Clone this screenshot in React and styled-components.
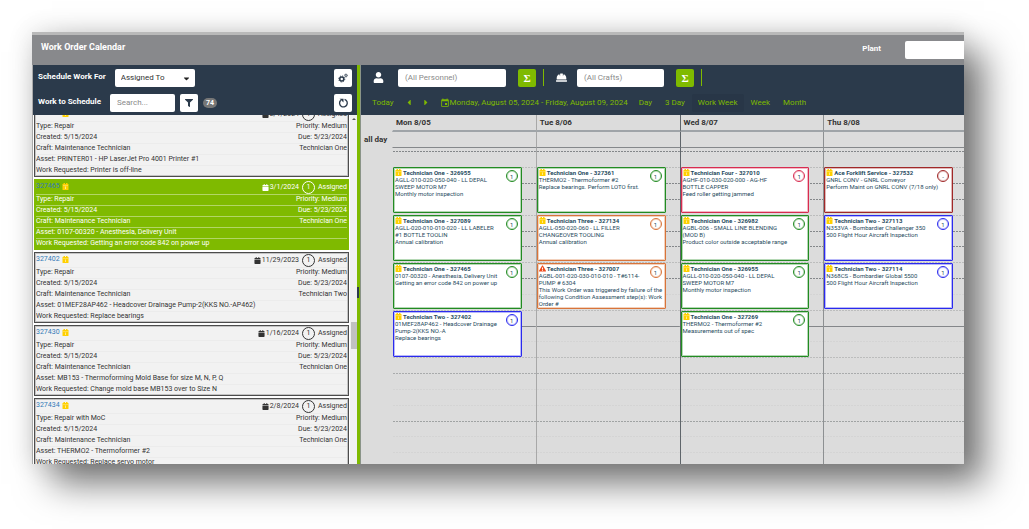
import styled, { createGlobalStyle } from "styled-components";
import {
  FaCalendar,
  FaCaretDown,
  FaCaretLeft,
  FaCaretRight,
  FaExclamationTriangle,
  FaFilter,
  FaHardHat,
  FaUser,
} from "react-icons/fa";
import { MdEvent } from "react-icons/md";

const GlobalStyle = createGlobalStyle`
  * {
    box-sizing: border-box;
  }
  body {
    margin: 0;
    background: #fff;
    font-family: Roboto, "Liberation Sans", Arial, sans-serif;
  }
  button, input, select {
    font-family: inherit;
  }
  ul {
    margin: 0;
    padding: 0;
    list-style: none;
  }
`;

const Page = styled.div`
  height: 100vh;
  padding: 32px 65px 65px 32px;
`;
const Frame = styled.div`
  display: flex;
  flex-direction: column;
  height: 100%;
  background: #fff;
  box-shadow: 20px 20px 34px rgba(0, 0, 0, 0.52), 0 0 24px rgba(0, 0, 0, 0.14);
`;
const TopBar = styled.header`
  display: flex;
  align-items: center;
  gap: 24px;
  height: 33px;
  padding-left: 9px;
  border-top: 3px solid #b9b9b9;
  background: #88898c;
  color: #fff;
  font-size: 8px;
  flex-shrink: 0;
`;
const Title = styled.h1`
  flex: 1;
  margin: 0;
  padding-bottom: 6px;
  font-size: 9px;
`;
const PlantLabel = styled.label`
  padding-bottom: 3px;
  font-weight: bold;
`;
const PlantInput = styled.input`
  width: 59px;
  height: 18px;
  border: none;
  border-radius: 2px 0 0 2px;
  background: #fff;
`;
const Main = styled.div`
  display: flex;
  flex: 1;
  min-height: 0;
`;
const Side = styled.aside`
  display: flex;
  flex-direction: column;
  width: 325px;
  flex-shrink: 0;
  border-left: 1px solid #aaa;
`;
const Splitter = styled.div`
  display: flex;
  flex-direction: column;
  align-items: flex-start;
  justify-content: center;
  width: 4px;
  padding-top: 56px;
  flex-shrink: 0;
  background: #7fba00;
  border-right: 1px solid #8a9488;
`;
const Handle = styled.span`
  width: 2px;
  height: 11px;
  background: #2b3a4b;
`;
const Toolbar = styled.div`
  display: flex;
  align-items: center;
  height: 25px;
  padding: 0 5px;
  flex-shrink: 0;
  background: #2b3a4b;
  color: #fff;
`;
const SideLabel = styled.label`
  margin-right: 9px;
  padding-bottom: 3px;
  font-size: 8px;
  font-weight: bold;
  white-space: nowrap;
`;
const SelectBox = styled.span`
  position: relative;
  width: 80px;
  height: 18px;

  svg {
    position: absolute;
    top: 5px;
    right: 4px;
    font-size: 9px;
    color: #222;
    pointer-events: none;
  }
`;
const Select = styled.select`
  display: block;
  appearance: none;
  width: 100%;
  height: 100%;
  padding: 0 6px;
  border: none;
  border-radius: 2px;
  background: #fff;
  color: #333;
  font-size: 8px;
`;
const TextInput = styled.input`
  width: ${(props) => props.$width};
  height: 18px;
  padding: 0 7px;
  border: none;
  border-radius: 2px;
  background: #fff;
  font-size: 8px;

  &::placeholder {
    color: #8a8a8a;
  }
`;
const IconButton = styled.button`
  display: flex;
  align-items: center;
  justify-content: center;
  width: 18px;
  height: 18px;
  margin-left: ${(props) => props.$gap || "auto"};
  padding: 0;
  border: none;
  border-radius: 2px;
  background: #fff;
  color: #2b3a4b;
  font-size: 8px;
  cursor: pointer;
`;
const SumButton = styled(IconButton)`
  background: #7fba00;
  color: #fff;
  font-family: "Liberation Serif", serif;
  font-size: 11px;
  font-weight: bold;
`;
const Badge = styled.span`
  height: 10px;
  margin-left: 5px;
  padding: 0 3px;
  border-radius: 5px;
  background: #777;
  font-size: 7px;
  font-weight: bold;
  line-height: 10px;
`;

const ListArea = styled.div`
  display: flex;
  flex: 1;
  min-height: 0;
  overflow: hidden;
`;
const OrderList = styled.ul`
  display: flex;
  flex: 1;
  flex-direction: column;
  gap: 2px;
  margin-top: -9px;
  padding: 0 1px;
`;
const Scrollbar = styled.div`
  display: flex;
  flex-direction: column;
  align-items: center;
  width: 7px;
  background: #f1f1f1;
`;
const Arrow = styled.span`
  margin-top: 3px;
  border: 2px solid transparent;
  border-top: none;
  border-bottom: 2px solid #555;
`;
const Thumb = styled.span`
  width: 6px;
  height: 27px;
  margin-top: 202px;
  background: #c1c1c1;
`;
const Order = styled.li`
  flex-shrink: 0;
  padding: 0 1px;
  border: 1px solid ${(props) => (props.$selected ? "#7fba00" : "#4c4c4c")};
  outline: ${(props) => (props.$selected ? "none" : "1px solid #c4c4c4")};
  outline-offset: -2px;
  background: ${(props) => (props.$selected ? "#7fba00" : "#f2f2f2")};
  color: ${(props) => (props.$selected ? "#fff" : "#333")};
  font-size: 7px;
`;
const OrderHead = styled.div`
  display: flex;
  align-items: center;
  height: 14px;
`;
const OrderId = styled.a`
  display: flex;
  align-items: center;
  gap: 2px;
  margin-right: auto;
  padding-bottom: 2px;
  color: #337ab7;
  text-decoration: none;
`;
const StartDate = styled.span`
  display: flex;
  align-items: center;
  gap: 1px;
`;
const Priority = styled.span`
  display: flex;
  align-items: center;
  justify-content: center;
  width: 13px;
  height: 13px;
  margin: 0 3px;
  border: 1px solid currentColor;
  border-radius: 50%;
`;
const OrderRow = styled.div`
  display: flex;
  justify-content: space-between;
  height: 11px;
  border-top: 1px solid ${(props) => (props.$selected ? "#b2d666" : "#ececec")};
  line-height: 9px;
  white-space: nowrap;
`;
const YellowIcon = styled.svg`
  width: 7px;
  height: 7px;
  flex-shrink: 0;
`;

const Schedule = styled.main`
  display: flex;
  flex: 1;
  flex-direction: column;
  min-width: 0;
  overflow: hidden;
  background: #dcdcdc;
`;
const FilterBar = styled(Toolbar)`
  padding: 0 12px;
  font-size: 11px;
`;
const FilterLabel = styled.label`
  display: flex;
  width: 11px;
  margin-right: ${(props) => props.$gap};
`;
const Divider = styled.span`
  width: 1px;
  height: 17px;
  margin: 0 12px 0 7px;
  background: #7fba00;
`;
const NavBar = styled(Toolbar)`
  gap: 1px;
  padding: 0 5px;
  color: #7fba00;
`;
const NavButton = styled.button`
  display: flex;
  align-items: center;
  height: 18px;
  padding: 0 6px;
  border: none;
  border-radius: 2px;
  background: ${(props) => (props.$active ? "#283647" : "transparent")};
  color: inherit;
  font-size: 8px;
  white-space: nowrap;
  cursor: pointer;
`;
const StepButton = styled(NavButton)`
  svg {
    width: 4px;
    height: 9px;
  }
`;
const RangeButton = styled(NavButton)`
  padding: 0 4px 0 5px;

  svg {
    font-size: 10px;
  }
`;

const Calendar = styled.div`
  display: grid;
  grid-template-columns: 31px repeat(4, 1fr);
  grid-template-rows: 17px 16px 1fr;
  flex: 1;
  min-height: 0;
  margin-right: -3px;
  color: #333;
  font-size: 8px;
  font-weight: bold;
`;
const DayHead = styled.div`
  padding-left: 3px;
  border-bottom: 2px solid #9fa4a8;
  border-left: 1px solid ${(props) => props.$line};
  line-height: 16px;
`;
const AllDayLabel = styled.div`
  padding-left: 3px;
  line-height: 15px;
`;
const AllDayCell = styled.div`
  border-bottom: 1px solid #85888b;
  border-left: 1px solid ${(props) => props.$line};
`;
const Day = styled.div`
  position: relative;
  min-height: 0;
  overflow: hidden;
  border-left: 1px solid ${(props) => props.$line};
`;
const Slots = styled.div`
  position: absolute;
  inset: 3px 0 auto;
`;
const Slot = styled.div`
  height: 16px;
  background: repeating-linear-gradient(
      90deg,
      ${(props) => props.$color} 0 2px,
      ${(props) => (props.$solid ? props.$color : "#dcdcdc")} 2px 3px
    )
    top / 100% 1px no-repeat;

  &:nth-child(6n) {
    height: 15px;
  }
`;
const Events = styled.div`
  position: relative;
  display: flex;
  flex-direction: column;
  gap: 2px;
  padding: 19px 14px 0 0;
`;
const Event = styled.article`
  height: 46px;
  padding: 1px 0 1px 1px;
  overflow: hidden;
  border: 1px solid ${(props) => props.$color};
  border-radius: 1px;
  box-shadow: inset 0 0 0 1px ${(props) => props.$color}55;
  background: #fff;
  color: #1f4b60;
  font-size: 6px;
  font-weight: normal;
  line-height: 7px;
`;
const EventTitle = styled.h2`
  display: flex;
  align-items: center;
  gap: 1px;
  margin: 0;
  font-size: 6px;
  line-height: 7px;
`;
const EventText = styled.p`
  margin: 0;
`;
const EventBadge = styled.span`
  float: right;
  display: flex;
  align-items: center;
  justify-content: center;
  width: 12px;
  height: 12px;
  margin: 1px 3px 1px 6px;
  border: 1px solid ${(props) => props.$color};
  border-radius: 50%;
  box-shadow: inset 0 0 0 1px ${(props) => props.$color}44;
`;

const orders = [
  {
    id: "327389",
    start: "2/1/2024",
    type: "Repair",
    tech: "Technician One",
    asset: "PRINTER01 - HP LaserJet Pro 4001 Printer #1",
    work: "Printer is off-line",
  },
  {
    id: "327465",
    start: "3/1/2024",
    type: "Repair",
    tech: "Technician One",
    asset: "0107-00320 - Anesthesia, Delivery Unit",
    work: "Getting an error code 842 on power up",
    selected: true,
  },
  {
    id: "327402",
    start: "11/29/2023",
    type: "Repair",
    tech: "Technician Two",
    asset: "01MEF28AP462 - Headcover Drainage Pump-2(KKS NO.-AP462)",
    work: "Replace bearings",
  },
  {
    id: "327430",
    start: "1/16/2024",
    type: "Repair",
    tech: "Technician One",
    asset: "MB153 - Thermoforming Mold Base for size M, N, P, Q",
    work: "Change mold base MB153 over to Size N",
  },
  {
    id: "327434",
    start: "2/8/2024",
    type: "Repair with MoC",
    tech: "Technician One",
    asset: "THERMO2 - Thermoformer #2",
    work: "Replace servo motor",
  },
];

const green = "#228b22";
const blue = "#2a2aee";
const orange = "#d8743a";
const crimson = "#d82c50";
const maroon = "#a02828";

const days = [
  {
    name: "Mon 8/05",
    line: "transparent",
    events: [
      {
        title: "Technician One - 326955",
        asset: "AGLL-010-020-050-040 - LL DEPAL SWEEP MOTOR M7",
        work: "Monthly motor inspection",
        color: green,
      },
      {
        title: "Technician One - 327089",
        asset: "AGLL-020-010-010-020 - LL LABELER #1 BOTTLE TOOLIN",
        work: "Annual calibration",
        color: green,
      },
      {
        title: "Technician One - 327465",
        asset: "0107-00320 - Anesthesia, Delivery Unit",
        work: "Getting an error code 842 on power up",
        color: green,
      },
      {
        title: "Technician Two - 327402",
        asset: "01MEF28AP462 - Headcover Drainage Pump-2(KKS NO.-A",
        work: "Replace bearings",
        color: blue,
      },
    ],
  },
  {
    name: "Tue 8/06",
    line: "#a8a8a8",
    events: [
      {
        title: "Technician One - 327361",
        asset: "THERMO2 - Thermoformer #2",
        work: "Replace bearings. Perform LOTO first.",
        color: green,
      },
      {
        title: "Technician Three - 327134",
        asset: "AGLL-050-020-060 - LL FILLER CHANGEOVER TOOLING",
        work: "Annual calibration",
        color: orange,
      },
      {
        title: "Technician Three - 327007",
        asset: "AGBL-001-020-030-010-010 - T#6114-PUMP # 6304",
        work: "This Work Order was triggered by failure of the following Condition Assessment step(s): Work Order #",
        color: orange,
        warning: true,
      },
    ],
  },
  {
    name: "Wed 8/07",
    line: "#5f656a",
    events: [
      {
        title: "Technician Four - 327010",
        asset: "AGHF-010-030-020-000 - AG-HF BOTTLE CAPPER",
        work: "Feed roller getting jammed",
        color: crimson,
      },
      {
        title: "Technician One - 326982",
        asset: "AGBL-006 - SMALL LINE BLENDING (MOD B)",
        work: "Product color outside acceptable range",
        color: green,
      },
      {
        title: "Technician One - 326955",
        asset: "AGLL-010-020-050-040 - LL DEPAL SWEEP MOTOR M7",
        work: "Monthly motor inspection",
        color: green,
      },
      {
        title: "Technician One - 327269",
        asset: "THERMO2 - Thermoformer #2",
        work: "Measurements out of spec",
        color: green,
      },
    ],
  },
  {
    name: "Thu 8/08",
    line: "#8d9092",
    events: [
      {
        title: "Ace Forklift Service - 327532",
        asset: "GNRL CONV - GNRL Conveyor",
        work: "Perform Maint on GNRL CONV (7/18 only)",
        color: maroon,
        priority: "-",
      },
      {
        title: "Technician Two - 327113",
        asset: "N353VA - Bombardier Challenger 350",
        work: "500 Flight Hour Aircraft Inspection",
        color: blue,
      },
      {
        title: "Technician Two - 327114",
        asset: "N368CS - Bombardier Global 5500",
        work: "500 Flight Hour Aircraft Inspection",
        color: blue,
      },
    ],
  },
];

const dark = "#84878a";
const light = "#bcbdbd";
const faint = "#d4d4d4";
// one colour for each half hour of the visible range
const slots = [
  dark, light, dark, dark, light, dark, dark, light, dark, faint,
  light, dark, faint, light, "#a9abac", faint, faint, "#a0a3a3", faint, faint,
];

const GiftCalendar = () => (
  <YellowIcon viewBox="0 0 14 14" aria-hidden="true">
    <path
      fill="#ffd000"
      d="M1 2h2V0h3v2h2V0h3v2h2v11a1 1 0 0 1-1 1H2a1 1 0 0 1-1-1z"
    />
    <path fill="#ffe88a" d="M2 4h10v1H2zM6 7h2v5H6z" />
  </YellowIcon>
);

const GearsIcon = () => (
  <svg width="10" height="10" viewBox="0 0 20 20" fill="none" stroke="currentColor">
    <circle cx="7.5" cy="12" r="4" strokeWidth="3" />
    <circle cx="7.5" cy="12" r="6" strokeWidth="2" strokeDasharray="2.4 2.3" />
    <circle cx="16" cy="5" r="2" strokeWidth="1.6" />
    <circle cx="16" cy="5" r="3.2" strokeWidth="1.2" strokeDasharray="1.3 1.2" />
  </svg>
);

const ReloadIcon = () => (
  <svg width="11" height="11" viewBox="0 0 20 20" fill="none" stroke="currentColor">
    <path d="M12 4.4A7 7 0 1 1 5 6" strokeWidth="2.4" />
    <path d="M3 3h7v7z" fill="currentColor" stroke="none" />
  </svg>
);

const WorkOrder = ({ order }) => (
  <Order $selected={order.selected}>
    <OrderHead>
      <OrderId href="#">
        {order.id}
        <GiftCalendar />
      </OrderId>
      <StartDate>
        <FaCalendar />
        {order.start}
      </StartDate>
      <Priority>1</Priority>
      <span>Assigned</span>
    </OrderHead>
    <OrderRow $selected={order.selected}>
      <span>Type: {order.type}</span>
      <span>Priority: Medium</span>
    </OrderRow>
    <OrderRow $selected={order.selected}>
      <span>Created: 5/15/2024</span>
      <span>Due: 5/23/2024</span>
    </OrderRow>
    <OrderRow $selected={order.selected}>
      <span>Craft: Maintenance Technician</span>
      <span>{order.tech}</span>
    </OrderRow>
    <OrderRow $selected={order.selected}>
      <span>Asset: {order.asset}</span>
    </OrderRow>
    <OrderRow $selected={order.selected}>
      <span>Work Requested: {order.work}</span>
    </OrderRow>
  </Order>
);

const DayEvent = ({ event }) => (
  <Event $color={event.color}>
    <EventBadge $color={event.color}>{event.priority || "1"}</EventBadge>
    <EventTitle>
      {event.warning ? <FaExclamationTriangle color="#f04a1c" size={7} /> : <GiftCalendar />}
      {event.title}
    </EventTitle>
    <EventText>{event.asset}</EventText>
    <EventText>{event.work}</EventText>
  </Event>
);

const App = () => {
  return (
    <Page>
      <GlobalStyle />
      <Frame>
        <TopBar>
          <Title>Work Order Calendar</Title>
          <PlantLabel htmlFor="plant">Plant</PlantLabel>
          <PlantInput id="plant" type="text" />
        </TopBar>
        <Main>
          <Side>
            <Toolbar>
              <SideLabel htmlFor="scheduleFor">Schedule Work For</SideLabel>
              <SelectBox>
                <Select id="scheduleFor">
                  <option>Assigned To</option>
                </Select>
                <FaCaretDown />
              </SelectBox>
              <IconButton type="button" aria-label="Settings">
                <GearsIcon />
              </IconButton>
            </Toolbar>
            <Toolbar>
              <SideLabel htmlFor="search">Work to Schedule</SideLabel>
              <TextInput id="search" type="text" placeholder="Search..." $width="65px" />
              <IconButton type="button" aria-label="Filter" $gap="5px">
                <FaFilter />
              </IconButton>
              <Badge>74</Badge>
              <IconButton type="button" aria-label="Refresh">
                <ReloadIcon />
              </IconButton>
            </Toolbar>
            <ListArea>
              <OrderList>
                {orders.map((order) => (
                  <WorkOrder key={order.id} order={order} />
                ))}
              </OrderList>
              <Scrollbar>
                <Arrow />
                <Thumb />
              </Scrollbar>
            </ListArea>
          </Side>
          <Splitter>
            <Handle />
          </Splitter>
          <Schedule>
            <FilterBar>
              <FilterLabel htmlFor="personnel" aria-label="Personnel" $gap="14px">
                <FaUser />
              </FilterLabel>
              <TextInput id="personnel" type="text" placeholder="(All Personnel)" $width="108px" />
              <SumButton type="button" aria-label="Sum personnel" $gap="12px">
                Σ
              </SumButton>
              <Divider />
              <FilterLabel htmlFor="crafts" aria-label="Crafts" $gap="10px">
                <FaHardHat />
              </FilterLabel>
              <TextInput id="crafts" type="text" placeholder="(All Crafts)" $width="87px" />
              <SumButton type="button" aria-label="Sum crafts" $gap="12px">
                Σ
              </SumButton>
              <Divider />
            </FilterBar>
            <NavBar>
              <NavButton type="button">Today</NavButton>
              <StepButton type="button" aria-label="Previous">
                <FaCaretLeft />
              </StepButton>
              <StepButton type="button" aria-label="Next">
                <FaCaretRight />
              </StepButton>
              <RangeButton type="button">
                <MdEvent />
                Monday, August 05, 2024 - Friday, August 09, 2024
              </RangeButton>
              <NavButton type="button">Day</NavButton>
              <NavButton type="button">3 Day</NavButton>
              <NavButton type="button" $active>
                Work Week
              </NavButton>
              <NavButton type="button">Week</NavButton>
              <NavButton type="button">Month</NavButton>
            </NavBar>
            <Calendar>
              <span />
              {days.map((day) => (
                <DayHead key={day.name} $line={day.line}>
                  {day.name}
                </DayHead>
              ))}
              <AllDayLabel>all day</AllDayLabel>
              {days.map((day) => (
                <AllDayCell key={day.name} $line={day.line} />
              ))}
              <span />
              {days.map((day) => (
                <Day key={day.name} $line={day.line}>
                  <Slots>
                    {slots.map((color, i) => (
                      <Slot key={i} $color={color} $solid={i === 11} />
                    ))}
                  </Slots>
                  <Events>
                    {day.events.map((event) => (
                      <DayEvent key={event.title} event={event} />
                    ))}
                  </Events>
                </Day>
              ))}
            </Calendar>
          </Schedule>
        </Main>
      </Frame>
    </Page>
  );
};

export default App;
